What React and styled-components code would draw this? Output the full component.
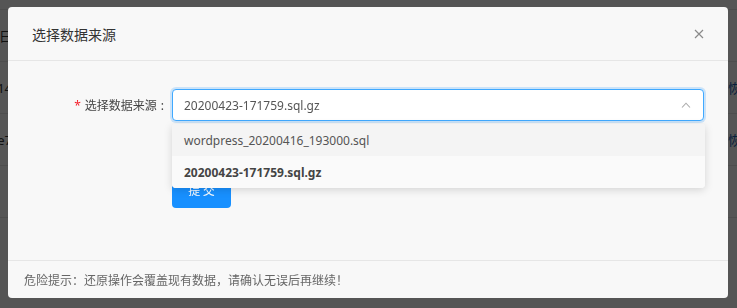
import React from 'react';
import styled, { createGlobalStyle } from 'styled-components';

const GlobalStyle = createGlobalStyle`
  html, body {
    margin: 0;
    padding: 0;
    width: 737px;
    height: 308px;
    overflow: hidden;
    font-family: 'Noto Sans', 'Noto Sans CJK SC', sans-serif;
    background: #fff;
  }
`;

const Page = styled.div`
  width: 737px;
  height: 308px;
  padding-top: 9px;
  box-sizing: border-box;
  background: #fff;
  overflow: hidden;
`;

const BgRow = styled.div`
  display: grid;
  grid-template-columns: 12px 1fr 9px;
  height: 51px;
  align-items: center;
  border-top: 1px solid #e8e8e8;
  font-size: 13px;
  color: #333;
`;

const BgCell = styled.span`
  white-space: nowrap;
  overflow: hidden;
  direction: rtl;
  text-align: left;
`;

const BgLink = styled.span`
  color: #1a5fb4;
  white-space: nowrap;
  font-family: 'Noto Sans CJK SC', sans-serif;
`;

const Mask = styled.div`
  position: fixed;
  inset: 0;
  background: rgba(0, 0, 0, 0.665);
`;

const Modal = styled.div`
  position: fixed;
  left: 8px;
  top: 7px;
  width: 720px;
  height: 291px;
  background: #f8f8f8;
  border-radius: 4px;
  display: flex;
  flex-direction: column;
  color: #333;
`;

const Header = styled.div`
  height: 54px;
  display: flex;
  align-items: center;
  justify-content: space-between;
  padding: 0 22px 0 24px;
  border-bottom: 1px solid #e6e6e6;
  box-sizing: border-box;
`;

const Title = styled.div`
  font-size: 14px;
  color: #333;
  font-family: 'Noto Sans CJK SC', sans-serif;
`;

const Close = styled.button`
  width: 14px;
  height: 14px;
  padding: 0;
  border: none;
  background: none;
  display: flex;
  align-items: center;
  justify-content: center;
`;

const Body = styled.div`
  flex: 1;
  padding: 28px 24px 0 0;
  box-sizing: border-box;
`;

const FormRow = styled.div`
  display: grid;
  grid-template-columns: 164px 532px;
  align-items: center;
  margin-bottom: ${(p) => p.$gap || 0}px;
`;

const Label = styled.label`
  text-align: right;
  padding-right: 8px;
  font-size: 12px;
  color: #444;
  font-family: 'Noto Sans CJK SC', sans-serif;
`;

const Star = styled.span`
  color: #f5222d;
  margin-right: 4px;
  font-family: 'Noto Sans', sans-serif;
`;

const Colon = styled.span`
  margin-left: 4px;
  font-family: 'Noto Sans', sans-serif;
`;

const SelectWrap = styled.div`
  position: relative;
`;

const SelectBox = styled.div`
  height: 30px;
  border: 1px solid #40a9ff;
  border-radius: 4px;
  background: #fff;
  box-shadow: 0 0 0 2px rgba(24, 144, 255, 0.2);
  display: flex;
  align-items: center;
  justify-content: space-between;
  padding: 0 12px 0 11px;
`;

const Value = styled.span`
  font-size: 12px;
  color: #555;
`;

const Dropdown = styled.ul`
  position: absolute;
  left: 0;
  right: -1px;
  top: 35px;
  margin: 0;
  padding: 0;
  list-style: none;
  background: #fafafa;
  border-radius: 4px;
  box-shadow: 0 2px 8px rgba(0, 0, 0, 0.15);
  overflow: hidden;
  z-index: 2;
`;

const Option = styled.li`
  height: 32px;
  display: flex;
  align-items: center;
  padding: 0 12px;
  font-size: 12px;
  color: ${(p) => (p.$selected ? '#444' : '#555')};
  font-weight: ${(p) => (p.$selected ? 700 : 400)};
  background: ${(p) => (p.$hover ? '#f4f4f4' : '#fafafa')};
`;

const Submit = styled.button`
  grid-column: 2;
  justify-self: start;
  width: 59px;
  height: 32px;
  padding: 0 0 6px;
  border: none;
  border-radius: 4px;
  background: #1890ff;
  color: #fff;
  font-size: 12px;
  font-family: 'Noto Sans CJK SC', sans-serif;
`;

const Footer = styled.div`
  height: 37px;
  border-top: 1px solid #e6e6e6;
  padding: 0 16px;
  display: flex;
  align-items: center;
  font-size: 12px;
  color: #666;
  font-family: 'Noto Sans CJK SC', sans-serif;
`;

const rows = [
  { a: '日', b: '' },
  { a: '14', b: '恢复' },
  { a: 'e7', b: '恢复' },
  { a: '', b: '' },
  { a: '', b: '' },
];

export default function App() {
  return (
    <>
      <GlobalStyle />
      <Page>
        {rows.map((r, i) => (
          <BgRow key={i}>
            <BgCell>{r.a}</BgCell>
            <span />
            <BgLink>{r.b}</BgLink>
          </BgRow>
        ))}
      </Page>
      <Mask />
      <Modal>
        <Header>
          <Title>选择数据来源</Title>
          <Close aria-label="close">
            <svg width="10" height="10" viewBox="0 0 10 10">
              <path d="M1 1 L9 9 M9 1 L1 9" stroke="#8a8a8a" strokeWidth="1.2" />
            </svg>
          </Close>
        </Header>
        <Body>
          <FormRow $gap={55}>
            <Label>
              <Star>*</Star>选择数据来源<Colon>:</Colon>
            </Label>
            <SelectWrap>
              <SelectBox>
                <Value>20200423-171759.sql.gz</Value>
                <svg width="10" height="6" viewBox="0 0 10 6">
                  <path d="M1 5.5 L5 1.2 L9 5.5" fill="none" stroke="#aaa" strokeWidth="1.1" />
                </svg>
              </SelectBox>
              <Dropdown>
                <Option $hover>wordpress_20200416_193000.sql</Option>
                <Option $selected>20200423-171759.sql.gz</Option>
              </Dropdown>
            </SelectWrap>
          </FormRow>
          <FormRow>
            <span />
            <Submit>提 交</Submit>
          </FormRow>
        </Body>
        <Footer>危险提示：还原操作会覆盖现有数据，请确认无误后再继续！</Footer>
      </Modal>
    </>
  );
}
